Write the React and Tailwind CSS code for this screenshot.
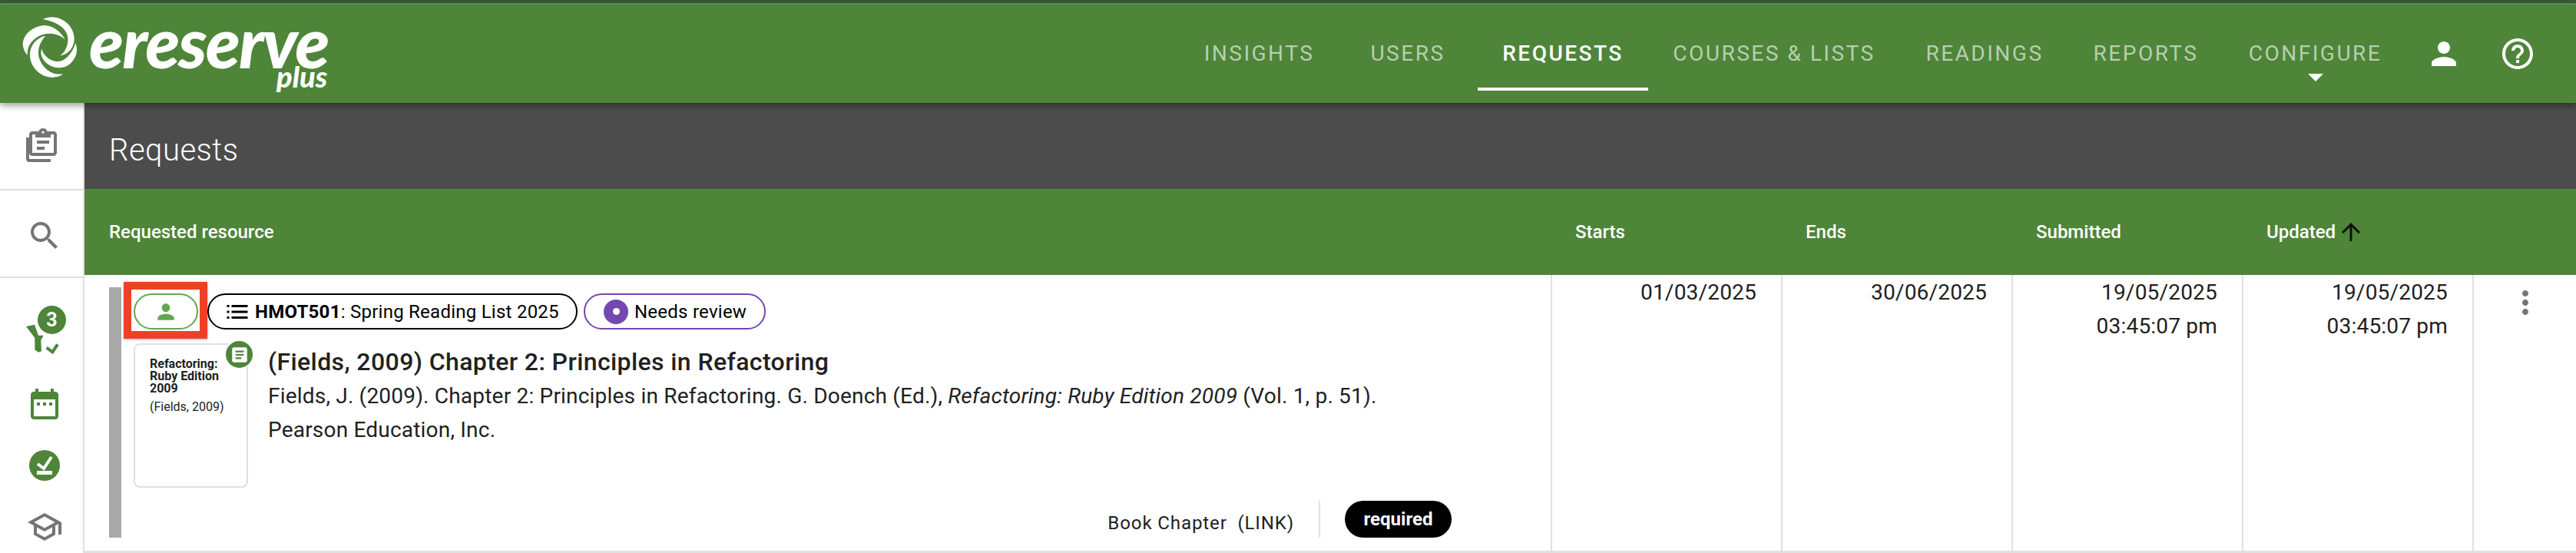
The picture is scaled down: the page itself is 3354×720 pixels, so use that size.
import React from "react";

const navItems = [
  { label: "INSIGHTS", width: "w-[205px]" },
  { label: "USERS", width: "w-[182px]" },
  { label: "REQUESTS", width: "w-[222px]", active: true },
  { label: "COURSES & LISTS", width: "w-[328px]" },
  { label: "READINGS", width: "w-[220px]" },
  { label: "REPORTS", width: "w-[200px]" },
  { label: "CONFIGURE", width: "w-[241px]", caret: true },
];

const Swirl = () => (
  <svg viewBox="0 0 330 330" className="w-[110px] h-[110px]" fill="#fff">
    <path d="M108 45C140 28 190 38 215 75c20 30 20 65 0 90-10 12-25 20-40 23 20-15 32-40 30-70-2-25-25-60-97-73z" />
    <path d="M195 125C175 90 135 60 95 72 55 82 25 115 30 150c2 14 8 26 18 35-4-30 12-55 40-72 30-17 75-18 107 12z" />
    <path d="M118 110C80 118 55 150 57 190c3 45 45 85 90 82 15 0 30-5 40-14-35 8-70-10-90-50-15-35-5-70 21-98z" />
    <path d="M103 160c4 22 25 45 55 50 32 4 62-25 77-72 12 30 2 60-20 80-22 20-55 22-80 8-25-15-42-40-32-66z" />
  </svg>
);

const ClipboardIcon = () => (
  <svg viewBox="0 0 24 24" className="w-[48px] h-[48px]" fill="#757575">
    <path d="M4 7H2v14c0 1.100.9 2 2 2h14v-2H4V7z" />
    <path fillRule="evenodd" d="M20 3h-4.200C15.400 1.800 14.300 1 13 1s-2.400.8-2.800 2H6c-1.100 0-2 .9-2 2v12c0 1.100.9 2 2 2h14c1.100 0 2-.9 2-2V5c0-1.100-.9-2-2-2zm-7-.2c.4 0 .8.4.8.8s-.4.8-.8.8-.8-.4-.8-.8.4-.8.8-.8zM20 17H6V5h2v2h10V5h2v12zM9 9h8v2H9V9zm0 4h5v2H9v-2z" />
  </svg>
);

const PersonIcon = ({ className }) => (
  <svg viewBox="0 0 24 24" className={className} fill="currentColor">
    <path d="M12 12c2.210 0 4-1.790 4-4s-1.790-4-4-4-4 1.790-4 4 1.790 4 4 4zm0 2c-2.670 0-8 1.340-8 4v2h16v-2c0-2.660-5.330-4-8-4z" />
  </svg>
);

const Sidebar = () => (
  <div className="w-[110px] shrink-0 bg-white border-r-2 border-[#e0e0e0] flex flex-col">
    <div className="h-[114px] w-full flex items-center justify-center border-b-2 border-[#e0e0e0] pb-[2px]">
      <ClipboardIcon />
    </div>
    <div className="h-[114px] w-full flex items-center justify-center border-b-2 border-[#e0e0e0] pl-[8px] pt-[6px]">
      <svg viewBox="0 0 24 24" className="w-[48px] h-[48px]" fill="#757575">
        <path d="M15.500 14h-.790l-.280-.270C15.410 12.590 16 11.110 16 9.500 16 5.910 13.090 3 9.500 3S3 5.910 3 9.500 5.910 16 9.500 16c1.610 0 3.090-.59 4.230-1.570l.270.280v.790l5 4.990L20.490 19l-4.990-5zm-6 0C7.010 14 5 11.990 5 9.500S7.010 5 9.500 5 14 7.010 14 9.500 11.990 14 9.500 14z" />
      </svg>
    </div>
    <div className="relative h-[62px] w-full mt-[36px]">
      <svg viewBox="0 0 48 48" className="absolute left-[30px] top-[20px] w-[48px] h-[48px]">
        <path fill="#4e8539" d="M4 7l11-2.300L20 18.700h6.700L23.300 25 24 39.300 20 40.700 15.300 37.300V22z" />
        <path fill="none" stroke="#4e8539" strokeWidth="4" d="M30.700 34.700l7.600 5.600L45 30.300" />
      </svg>
      <span className="absolute left-[49px] top-0 w-[37px] h-[37px] rounded-full bg-[#4e8539] text-white font-bold text-[25px] flex items-center justify-center">
        3
      </span>
    </div>
    <div className="mt-[42px] pl-[34px]">
      <svg viewBox="0 0 24 24" className="w-[48px] h-[48px] block" fill="#4e8539">
        <path fillRule="evenodd" d="M19 4h-1V2h-2v2H8V2H6v2H5C3.900 4 3 4.900 3 6v14c0 1.100.9 2 2 2h14c1.100 0 2-.9 2-2V6c0-1.100-.9-2-2-2zm0 16H5V9h14v11zM7 11h2v2H7zm4 0h2v2h-2zm4 0h2v2h-2z" />
      </svg>
    </div>
    <div className="mt-[32px] pl-[34px]">
      <svg viewBox="0 0 24 24" className="w-[48px] h-[48px] block">
        <circle cx="12" cy="12" r="10" fill="#4e8539" />
        <path fill="none" stroke="#fff" strokeWidth="2" d="M7.500 11l4 3 5-7.500" />
        <rect x="7" y="15.500" width="10" height="2.500" fill="#fff" />
      </svg>
    </div>
    <div className="mt-[32px] pl-[34px]">
      <svg viewBox="0 0 24 24" className="w-[48px] h-[48px] block" fill="#757575">
        <path d="M12 3L1 9l4 2.180v6L12 21l7-3.820v-6l2-1.090V17h2V9L12 3zm6.820 6L12 12.720 5.180 9 12 5.280 18.820 9zM17 15.990l-5 2.730-5-2.730v-3.720L12 15l5-2.730v3.720z" />
      </svg>
    </div>
  </div>
);

const RowCell = ({ lines }) => (
  <div className="w-[300px] shrink-0 border-l-2 border-[#e0e0e0] pr-[32px] pt-[1px] text-right text-[28px] leading-[44px] tracking-[0.2px] text-[#212121]">
    {lines.map((l) => (
      <div key={l}>{l}</div>
    ))}
  </div>
);

export default function App() {
  return (
    <div className="w-[3354px] h-[720px] overflow-hidden bg-white font-['Roboto',sans-serif] flex flex-col">
      {/* Top bar */}
      <div className="h-[4px] bg-[#365a32]" />
      <div className="h-[130px] bg-[#4e8539] border-t-2 border-[#5e8a58] flex relative z-10 shadow-[0_4px_8px_rgba(0,0,0,0.35)]">
        <div className="w-[1537px] shrink-0 relative pl-[20px] pt-[4px] text-white">
          <Swirl />
          <span className="absolute left-[116px] top-[22px] font-['Lato',sans-serif] font-black italic text-[92px] leading-[52px] tracking-[-2px]">
            ereserve
          </span>
          <span className="absolute left-[360px] top-[81px] font-['Lato',sans-serif] font-black italic text-[38px] leading-[24px]">
            plus
          </span>
        </div>
        <div className="flex h-[112px]">
          {navItems.map((n) => (
            <div
              key={n.label}
              className={`${n.width} shrink-0 relative flex items-center justify-center pt-[16px] text-[28px] tracking-[2.5px] ${
                n.active ? "text-white font-medium" : "text-[#b8ceb0]"
              }`}
            >
              {n.label}
              {n.active && <span className="absolute left-0 right-0 bottom-0 h-[4px] bg-white" />}
              {n.caret && (
                <span className="absolute left-[111px] top-[90px] w-0 h-0 border-l-[10px] border-r-[10px] border-t-[10px] border-l-transparent border-r-transparent border-t-white" />
              )}
            </div>
          ))}
        </div>
        <div className="flex items-center h-[128px] pl-[23px] gap-[48px] text-white">
          <PersonIcon className="w-[48px] h-[48px]" />
          <svg viewBox="0 0 24 24" className="w-[48px] h-[48px]" fill="currentColor">
            <path d="M11 18h2v-2h-2v2zm1-16C6.480 2 2 6.480 2 12s4.480 10 10 10 10-4.480 10-10S17.520 2 12 2zm0 18c-4.410 0-8-3.590-8-8s3.590-8 8-8 8 3.590 8 8-3.590 8-8 8zm0-14c-2.210 0-4 1.790-4 4h2c0-1.100.9-2 2-2s2 .9 2 2c0 2-3 1.750-3 5h2c0-2.250 3-2.500 3-5 0-2.210-1.790-4-4-4z" />
          </svg>
        </div>
      </div>

      <div className="flex flex-1 min-h-0">
        <Sidebar />
        <div className="flex-1 flex flex-col min-w-0">
          {/* Title */}
          <div className="h-[112px] bg-[#4c4c4c] flex items-center pl-[32px] pt-[12px] text-white text-[40px] font-light tracking-[0.5px]">
            Requests
          </div>

          {/* Table head */}
          <div className="h-[112px] bg-[#4e8539] flex text-white text-[24px] font-medium pt-[38px]">
            <div className="w-[1909px] shrink-0 pl-[32px]">Requested resource</div>
            {["Starts", "Ends", "Submitted"].map((h) => (
              <div key={h} className="w-[300px] shrink-0 pl-[32px]">
                {h}
              </div>
            ))}
            <div className="w-[300px] shrink-0 pl-[32px] flex items-start gap-[2px]">
              Updated
              <svg viewBox="0 0 24 24" className="w-[36px] h-[36px]" fill="#111">
                <path d="M4 12l1.410 1.410L11 7.830V20h2V7.830l5.580 5.590L20 12l-8-8-8 8z" />
              </svg>
            </div>
          </div>

          {/* Row */}
          <div className="flex-1 flex border-b-[3px] border-[#e0e0e0] min-h-0">
            <div className="w-[1909px] shrink-0 relative flex pl-[32px] pt-[16px]">
              <div className="w-[16px] h-[326px] bg-[#a9a9a9] shrink-0" />
              <div className="pl-[16px] flex-1 min-w-0">
                <div className="flex items-center h-[47px] mt-[8px] text-[24px] text-black tracking-[0.25px]">
                  <div className="relative w-[84px] h-[47px] rounded-full border-2 border-[#5fa850] flex items-center justify-center text-[#5fa850] bg-white">
                    <PersonIcon className="w-[32px] h-[32px]" />
                    <div className="absolute left-[-15px] top-[-17px] w-[109px] h-[74px] border-[10px] border-[#ec4224] shadow-[0_1px_3px_rgba(0,0,0,0.3)]" />
                  </div>
                  <div className="ml-[12px] h-[47px] w-[482px] rounded-full border-2 border-black flex items-center pl-[19px]">
                    <svg viewBox="0 0 24 24" className="w-[36px] h-[36px] mr-[5px]" fill="#000">
                      <path d="M3 6h2v2H3zm0 5h2v2H3zm0 5h2v2H3zM7 6h14v2H7zm0 5h14v2H7zm0 5h14v2H7z" />
                    </svg>
                    <span>
                      <b className="font-bold">HMOT501</b>: Spring Reading List 2025
                    </span>
                  </div>
                  <div className="ml-[8px] h-[47px] w-[237px] rounded-full border-2 border-[#7348b0] flex items-center pl-[24px]">
                    <span className="w-[32px] h-[32px] rounded-full bg-[#7348b0] flex items-center justify-center mr-[8px]">
                      <span className="w-[9px] h-[9px] rounded-full bg-white" />
                    </span>
                    Needs review
                  </div>
                </div>

                <div className="flex mt-[18px]">
                  <div className="relative w-[149px] h-[188px] shrink-0 rounded-[8px] border-2 border-[#e0e0e0] pl-[19px] pt-[17px] text-[#212121]">
                    <div className="text-[16px] leading-[16px] font-bold">
                      Refactoring:
                      <br />
                      Ruby Edition
                      <br />
                      2009
                    </div>
                    <div className="text-[16px] leading-[18px] mt-[7px]">(Fields, 2009)</div>
                    <div className="absolute left-[116px] top-[-7px] w-[39px] h-[39px] rounded-full bg-[#4e8539] border-2 border-white flex items-center justify-center">
                      <svg viewBox="0 0 24 24" className="w-[26px] h-[26px]" fill="#fff">
                        <path fillRule="evenodd" d="M19 3H5c-1.100 0-2 .9-2 2v14c0 1.100.9 2 2 2h14c1.100 0 2-.9 2-2V5c0-1.100-.9-2-2-2zM7 7h10v2H7zm0 4h10v2H7zm0 4h7v2H7z" />
                      </svg>
                    </div>
                  </div>
                  <div className="pl-[26px] text-[#212121] min-w-0">
                    <h2 className="text-[32px] leading-[44px] font-medium tracking-[0.4px] mt-[2px]">
                      (Fields, 2009) Chapter 2: Principles in Refactoring
                    </h2>
                    <p className="mt-[1px] text-[28px] leading-[44px] tracking-[0.2px] w-[1500px]">
                      Fields, J. (2009). Chapter 2: Principles in Refactoring. G. Doench (Ed.),{" "}
                      <i>Refactoring: Ruby Edition 2009</i> (Vol. 1, p. 51).
                      <br />
                      Pearson Education, Inc.
                    </p>
                  </div>
                </div>
              </div>

              {/* Type and required tag */}
              <div className="absolute right-[129px] top-[294px] flex items-center h-[48px] text-[24px] text-[#212121] tracking-[0.9px]">
                <span className="mr-[32px] mt-[10px]">Book Chapter&nbsp;&nbsp;(LINK)</span>
                <div className="h-[48px] border-l-2 border-[#e0e0e0] mr-[32px]" />
                <span className="w-[139px] h-[48px] rounded-full bg-black text-white font-bold flex items-center justify-center tracking-normal">
                  required
                </span>
              </div>
            </div>
            <RowCell lines={["01/03/2025"]} />
            <RowCell lines={["30/06/2025"]} />
            <RowCell lines={["19/05/2025", "03:45:07 pm"]} />
            <RowCell lines={["19/05/2025", "03:45:07 pm"]} />
            <div className="flex-1 border-l-2 border-[#e0e0e0] flex justify-center pt-[12px]">
              <svg viewBox="0 0 24 24" className="w-[48px] h-[48px]" fill="#757575">
                <path d="M12 8c1.100 0 2-.9 2-2s-.9-2-2-2-2 .9-2 2 .9 2 2 2zm0 2c-1.100 0-2 .9-2 2s.9 2 2 2 2-.9 2-2-.9-2-2-2zm0 6c-1.100 0-2 .9-2 2s.9 2 2 2 2-.9 2-2-.9-2-2-2z" />
              </svg>
            </div>
          </div>
        </div>
      </div>
    </div>
  );
}
